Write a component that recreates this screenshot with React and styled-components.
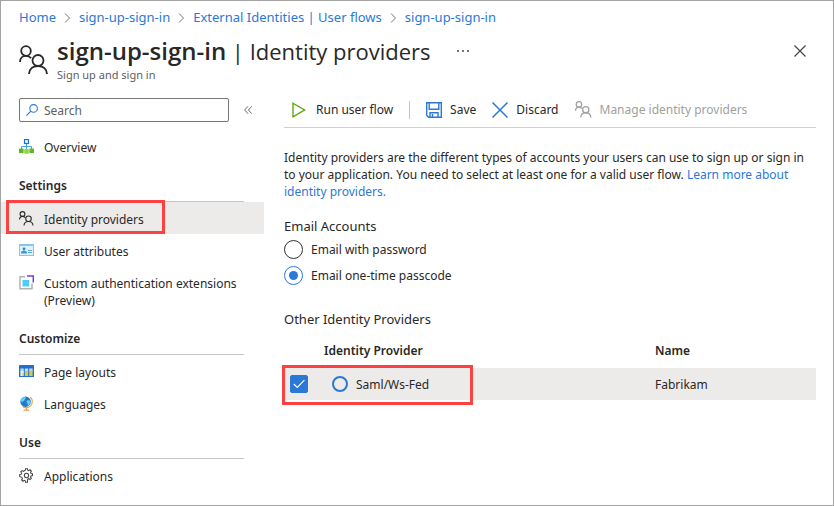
import { useState } from "react";
import styled, { createGlobalStyle } from "styled-components";

const App = () => {
    const [method, setMethod] = useState("otp");
    const [checked, setChecked] = useState(true);

    return (
        <>
            <GlobalStyle />
            <Blade>
                <Breadcrumb aria-label="Breadcrumb">
                    {crumbs.map((crumb, i) => (
                        <Crumb key={i}>
                            {i > 0 && <ChevronIcon />}
                            <Link href="#">{crumb}</Link>
                        </Crumb>
                    ))}
                </Breadcrumb>

                <Header>
                    <PeopleIcon size={30} />
                    <Titles>
                        <Title><b>sign-up-sign-in</b> | Identity providers</Title>
                        <Subtitle>Sign up and sign in</Subtitle>
                    </Titles>
                    <IconButton aria-label="More"><DotsIcon /></IconButton>
                    <CloseButton aria-label="Close"><CloseIcon size={12} color="#444" /></CloseButton>
                </Header>

                <Body>
                    <Sidebar>
                        <SearchRow>
                            <SearchBox>
                                <SearchIcon />
                                <input type="text" placeholder="Search" aria-label="Search" />
                            </SearchBox>
                            <IconButton aria-label="Collapse menu"><CollapseIcon /></IconButton>
                        </SearchRow>
                        {menu.map((group, i) => (
                            <nav key={i} aria-label={group.title || "General"}>
                                {group.title && <GroupTitle>{group.title}</GroupTitle>}
                                {group.items.map(({ label, Icon, selected }) => (
                                    <MenuItem key={label} href="#" $selected={selected}>
                                        <Icon />
                                        <span>{label}</span>
                                        {selected && <MenuMark />}
                                    </MenuItem>
                                ))}
                            </nav>
                        ))}
                    </Sidebar>

                    <Main>
                        <Toolbar>
                            <Command $gap={10}><RunIcon />Run user flow</Command>
                            <Divider />
                            <Command><SaveIcon />Save</Command>
                            <Command><CloseIcon size={16} color="#2b78d6" />Discard</Command>
                            <Command disabled><PeopleIcon size={17} />Manage identity providers</Command>
                        </Toolbar>

                        <Intro>
                            Identity providers are the different types of accounts your users can use to sign up or sign in
                            to your application. You need to select at least one for a valid user flow.{" "}
                            <Link href="#">Learn more about identity providers.</Link>
                        </Intro>

                        <Accounts>
                            <legend>Email Accounts</legend>
                            {methods.map(({ id, label }) => (
                                <Option key={id}>
                                    <Radio
                                        type="radio"
                                        name="method"
                                        checked={method === id}
                                        onChange={() => setMethod(id)}
                                    />
                                    {label}
                                </Option>
                            ))}
                        </Accounts>

                        <SectionTitle id="others">Other Identity Providers</SectionTitle>
                        <Table aria-labelledby="others">
                            <colgroup>
                                <col width="40" />
                                <col />
                                <col width="161" />
                            </colgroup>
                            <thead>
                                <tr>
                                    <th />
                                    <th>Identity Provider</th>
                                    <th>Name</th>
                                </tr>
                            </thead>
                            <tbody>
                                <tr>
                                    <td>
                                        <RowMark />
                                        <Check>
                                            <input
                                                type="checkbox"
                                                aria-label="Saml/Ws-Fed"
                                                checked={checked}
                                                onChange={() => setChecked(!checked)}
                                            />
                                            {checked && <TickIcon />}
                                        </Check>
                                    </td>
                                    <td><Provider>Saml/Ws-Fed</Provider></td>
                                    <td>Fabrikam</td>
                                </tr>
                            </tbody>
                        </Table>
                    </Main>
                </Body>
            </Blade>
        </>
    );
};

export default App;


/* icons */

const ChevronIcon = () => (
    <svg width="7" height="10" viewBox="0 0 7 10" fill="none" stroke="#777">
        <path d="M1 .5 5.5 5 1 9.5" />
    </svg>
);

const PeopleIcon = ({ size = 15 }) => (
    <svg width={size} height={size} viewBox="0 0 30 30" fill="none" stroke="currentColor" strokeWidth={size > 20 ? 1.8 : 2.2}>
        <circle cx="7" cy="6" r="4.8" />
        <path d="M1 17c0-4 2.6-6.2 6-6.2 2.2 0 3.8.8 5.2 2.4" />
        <circle cx="19" cy="15.5" r="5.5" />
        <path d="M10 29c.3-5.2 4-8 9-8s8.700 2.800 9 8" />
    </svg>
);

const DotsIcon = () => (
    <svg width="12" height="4" viewBox="0 0 12 4" fill="#777">
        <rect x="0" y="1" width="2" height="2" />
        <rect x="5" y="1" width="2" height="2" />
        <rect x="10" y="1" width="2" height="2" />
    </svg>
);

const CloseIcon = ({ size, color }) => (
    <svg width={size} height={size} viewBox={`0 0 ${size} ${size}`} stroke={color} strokeWidth={size > 12 ? 1.5 : 1.2}>
        <path d={`M.5 .5 ${size - 0.5} ${size - 0.5}M${size - 0.5} .5 .5 ${size - 0.5}`} />
    </svg>
);

const SearchIcon = () => (
    <svg width="12" height="12" viewBox="0 0 12 12" fill="none" stroke="#2b78d6" strokeWidth="1.1">
        <circle cx="7.6" cy="4.4" r="3.8" />
        <path d="M4.9 7.1.4 11.6" />
    </svg>
);

const CollapseIcon = () => (
    <svg width="8" height="8" viewBox="0 0 8 8" fill="none" stroke="#666">
        <path d="M4 .3.6 4 4 7.7M7.8.3 4.4 4l3.400 3.700" />
    </svg>
);

const OverviewIcon = () => (
    <svg width="15" height="15" viewBox="0 0 15 15">
        <path d="M7.5 5v5M2.5 11V7.5h10V11" fill="none" stroke="#4aa3e0" />
        <rect x="5.5" y=".5" width="4" height="4" fill="#e8f3fd" stroke="#1f6fd0" strokeWidth="1.2" />
        <rect x="0" y="9.5" width="4.6" height="4.6" rx=".5" fill="#5fb52b" />
        <rect x="5.2" y="10" width="4.6" height="4.8" rx=".5" fill="#8fd93c" />
        <rect x="10.4" y="9.5" width="4.6" height="4.6" rx=".5" fill="#5fb52b" />
    </svg>
);

const CardIcon = () => (
    <svg width="15" height="15" viewBox="0 0 15 15">
        <rect x=".5" y="1.5" width="14" height="11" fill="#dff1fb" stroke="#85c6ea" />
        <rect x="0" y="1" width="15" height="2" fill="#85c6ea" />
        <circle cx="5" cy="5.8" r="1.4" fill="#2b86c5" />
        <path d="M2 10.5c0-2 1-2.9 3-2.9s3 .9 3 2.9z" fill="#3f97d0" />
        <path d="M9 7.5h4M9 9.5h4" stroke="#5aaede" />
    </svg>
);

const ExtensionIcon = () => (
    <svg width="15" height="15" viewBox="0 0 15 15" fill="none">
        <path d="M6 1.7H1v12h12V8.5" stroke="#b3b3b3" strokeWidth="1.5" />
        <rect x="3.5" y="5" width="6.8" height="6.5" fill="#50cdf2" />
        <path d="M8 1h6.3v6.5" stroke="#773adc" strokeWidth="1.5" />
    </svg>
);

const LayoutIcon = () => (
    <svg width="15" height="15" viewBox="0 0 15 15">
        <rect x="0" y="1" width="15" height="12" rx=".6" fill="#1f6fd0" />
        <path d="M1.4 4.500h3.400v3H1.400zM5.800 4.500h3.400v3H5.800zM10.200 4.500h3.400v3h-3.400z" fill="#b9dcf8" />
        <path d="M1.4 7h3.4v5H1.4z" fill="#f2f2f2" />
        <path d="M5.8 7h3.4v5H5.8zM10.2 6.5h3.4V12h-3.4zM3.4 9h1.4v3H3.4z" fill="#dcc64a" />
    </svg>
);

const GlobeIcon = () => (
    <svg width="15" height="15" viewBox="0 0 16 16" fill="none">
        <path d="M12 1.2c3.4 3 2.8 9.3-2.5 10.9-2 .6-4.2.2-5.7-.9" stroke="#f0a036" strokeWidth="1.2" />
        <path d="M8 12.5v2M4.8 15h6" stroke="#f0a036" strokeWidth="1.4" />
        <circle cx="7" cy="6" r="5.6" fill="#2478cf" />
        <path d="M3 2.2c2-1.5 4-1.2 4.4-.3.3 1-1.4 1.2-1.5 2.4 0 1.1-1.4 1-2.200 2C2.600 7 2 5.300 2 4.500zM8.500 5c1.500-.7 3-.3 3.500.8-.1 2-1 3.600-2.300 4.500-1.200-1-.2-2.200-1-3.100-.8-.7-.8-1.700-.2-2.200z" fill="#5fd3f3" />
    </svg>
);

const GearIcon = () => (
    <svg width="15" height="15" viewBox="0 0 16 16" fill="none" stroke="#444" strokeWidth="1.1">
        <path d="M6.7 2.3 7 .7h2l.3 1.6 1.1.5 1.4-.9 1.4 1.4-.9 1.4.5 1.1 1.6.3v2l-1.6.3-.5 1.1.9 1.4-1.4 1.4-1.4-.9-1.1.5L9 15.3H7l-.3-1.6-1.1-.5-1.4.9-1.4-1.4.9-1.4-.5-1.1L.7 9V7l1.6-.3.5-1.1-.9-1.4 1.4-1.4 1.4.9z" />
        <circle cx="8" cy="8" r="2.3" />
    </svg>
);

const RunIcon = () => (
    <svg width="14" height="16" viewBox="0 0 14 16" fill="none" stroke="#57a300" strokeWidth="1.3">
        <path d="M1 1.2 12.6 8 1 14.8z" />
    </svg>
);

const SaveIcon = () => (
    <svg width="16" height="16" viewBox="0 0 16 16" fill="none" stroke="#2b78d6" strokeWidth="1.4">
        <path d="M.7.7h14.6v14.6H2.8L.7 13.2z" />
        <path d="M3.2.7v6.6h9.6V.7M4 15.3v-4.6h8v4.600M6.500 12v3.300" />
    </svg>
);

const TickIcon = () => (
    <svg width="12" height="10" viewBox="0 0 12 10" fill="none" stroke="#fff" strokeWidth="1.1">
        <path d="M.8 5 4.3 8.5 11.4 1.2" />
    </svg>
);


/* data */

const crumbs = ["Home", "sign-up-sign-in", "External Identities | User flows", "sign-up-sign-in"];

const menu = [
    { items: [{ label: "Overview", Icon: OverviewIcon }] },
    {
        title: "Settings",
        items: [
            { label: "Identity providers", Icon: PeopleIcon, selected: true },
            { label: "User attributes", Icon: CardIcon },
            { label: "Custom authentication extensions (Preview)", Icon: ExtensionIcon },
        ],
    },
    {
        title: "Customize",
        items: [
            { label: "Page layouts", Icon: LayoutIcon },
            { label: "Languages", Icon: GlobeIcon },
        ],
    },
    { title: "Use", items: [{ label: "Applications", Icon: GearIcon }] },
];

const methods = [
    { id: "password", label: "Email with password" },
    { id: "otp", label: "Email one-time passcode" },
];


/* styles */

const GlobalStyle = createGlobalStyle`
    *, *::before { box-sizing: border-box; }

    body {
        margin: 0;
        background: #fff;
        color: #292827;
        font: 12px/17px "Noto Sans", "Open Sans", sans-serif;
    }

    button, input { font: inherit; color: inherit; }
    svg { flex: none; display: block; }
`

const Blade = styled.div`
    min-height: 100vh;
    border: 1px solid #a3a3a3;
`

const Link = styled.a`
    color: #2b78d6;
    text-decoration: none;
    &:hover { text-decoration: underline; }
`

const Breadcrumb = styled.nav`
    display: flex;
    padding: 8px 18px 0;
    font-size: 13px;
`

const Crumb = styled.span`
    display: flex;
    align-items: center;

    svg { margin: 0 8px; }
`

const Header = styled.header`
    display: flex;
    align-items: flex-start;
    padding: 10px 27px 0 18px;

    > svg { margin-top: 9px; }
`

const Titles = styled.div`
    margin: 0 26px 0 8px;
`

const Title = styled.h1`
    margin: 0;
    font-family: "Open Sans", "Noto Sans", sans-serif;
    font-size: 22px;
    line-height: 30px;
    font-weight: 400;

    b { font-size: 24px; line-height: 24px; font-weight: 600; }
`

const Subtitle = styled.div`
    color: #605e5c;
    font-size: 11px;
    line-height: 17px;
`

const IconButton = styled.button`
    display: flex;
    align-items: center;
    height: 30px;
    padding: 0;
    border: 0;
    background: none;
    cursor: pointer;
`

const CloseButton = styled(IconButton)`
    margin-left: auto;
`

const Body = styled.div`
    display: flex;
    padding-top: 15px;
`

const Sidebar = styled.aside`
    flex: none;
    width: 263px;
`

const SearchRow = styled.div`
    display: flex;
    align-items: center;
    gap: 15px;
    height: 24px;
    margin: 0 0 8px 18px;
`

const SearchBox = styled.label`
    display: flex;
    align-items: center;
    gap: 6px;
    width: 210px;
    height: 24px;
    padding: 0 6px;
    border: 1px solid #7a7876;
    border-radius: 2px;

    input {
        flex: 1;
        min-width: 0;
        padding: 0;
        border: 0;
        outline: 0;
        background: none;
    }

    input::placeholder { color: #605e5c; }
`

const GroupTitle = styled.h2`
    height: 40px;
    margin: 0 20px 0 18px;
    padding-top: 15px;
    border-bottom: 1px solid #c8c6c4;
    font-size: 12px;
    line-height: 17px;
    font-weight: 600;
`

const MenuItem = styled.a`
    position: relative;
    display: flex;
    gap: 10px;
    padding: 9px 20px 6px 18px;
    background: ${({ $selected }) => ($selected ? "#edebe9" : "none")};
    color: inherit;
    text-decoration: none;
`

const Mark = styled.span`
    position: absolute;
    border: 3px solid #fb4141;
    pointer-events: none;
`

const MenuMark = styled(Mark)`
    top: -2px;
    left: 5px;
    width: 159px;
    height: 34px;
`

const RowMark = styled(Mark)`
    top: -3px;
    left: -2px;
    width: 191px;
    height: 40px;
`

const Main = styled.main`
    flex: 1;
    min-width: 0;
    padding: 0 17px 0 20px;
`

const Toolbar = styled.div`
    display: flex;
    align-items: center;
    gap: 16px;
    height: 30px;
    padding: 0 0 6px 8px;
    border-bottom: 1px solid #d2d0ce;
`

const Command = styled.button`
    display: flex;
    align-items: center;
    gap: ${({ $gap = 8 }) => $gap}px;
    padding: 0;
    border: 0;
    background: none;
    white-space: nowrap;
    cursor: pointer;

    &:disabled { color: #a19f9d; cursor: default; }
`

const Divider = styled.span`
    width: 1px;
    height: 18px;
    background: #c8c6c4;
`

const Intro = styled.p`
    margin: 21px 0 17px;
`

const Accounts = styled.fieldset`
    margin: 0 0 22px;
    padding: 0;
    border: 0;

    legend {
        padding: 0 0 1px;
        font-size: 13px;
        line-height: 18px;
    }
`

const Option = styled.label`
    display: flex;
    align-items: center;
    gap: 8px;
    height: 26px;
`

const Radio = styled.input`
    appearance: none;
    display: grid;
    place-items: center;
    width: 19px;
    height: 19px;
    margin: 0;
    border: 1px solid #323130;
    border-radius: 50%;

    &:checked { border-color: #2b78d6; }

    &:checked::before {
        content: '';
        width: 9px;
        height: 9px;
        border-radius: 50%;
        background: #2b78d6;
    }
`

const SectionTitle = styled.h3`
    margin: 0;
    font-size: 13px;
    line-height: 18px;
    font-weight: 400;
`

const Table = styled.table`
    width: 100%;
    margin-top: 5px;
    border-collapse: collapse;
    table-layout: fixed;
    text-align: left;

    th, td { padding: 0; }
    th { height: 35px; font-weight: 600; }
    td { height: 32px; }
    td:first-child { position: relative; padding-left: 6px; }
    tbody tr { background: #edebe9; }
`

const Check = styled.label`
    display: grid;
    place-items: center;
    width: 18px;
    height: 18px;

    > * { grid-area: 1 / 1; }

    input {
        appearance: none;
        width: 18px;
        height: 18px;
        margin: 0;
        border: 1px solid #323130;
        border-radius: 2px;
    }

    input:checked {
        border-color: #2b78d6;
        background: #2b78d6;
    }

    svg { pointer-events: none; z-index: 1; }
`

const Provider = styled.span`
    display: flex;
    align-items: center;
    gap: 8px;
    padding-left: 8px;

    &::before {
        content: '';
        width: 16px;
        height: 16px;
        border: 2px solid #2b78d6;
        border-radius: 50%;
    }
`
